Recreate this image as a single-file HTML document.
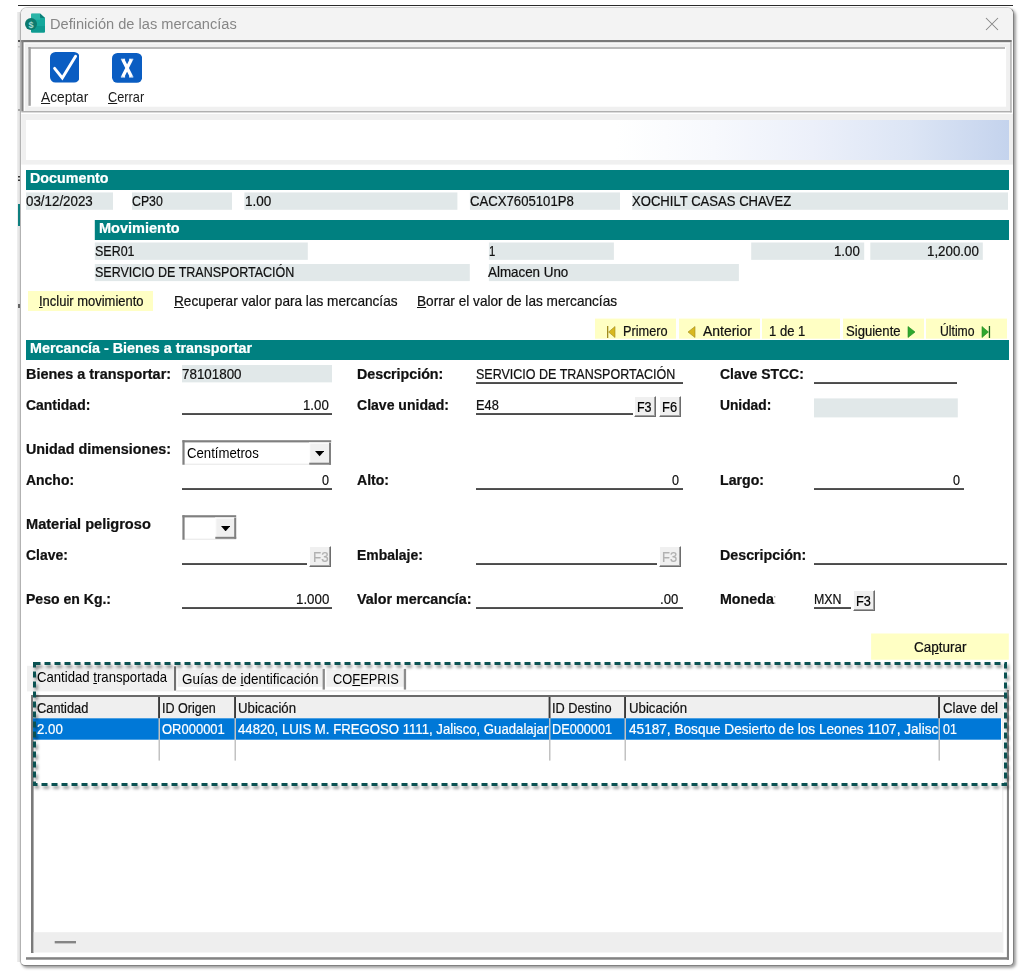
<!DOCTYPE html>
<html lang="es">
<head>
<meta charset="utf-8">
<title>Definición de las mercancías</title>
<style>
*{box-sizing:border-box;margin:0;padding:0}
html,body{width:1022px;height:974px;overflow:hidden;background:#fff}
body{position:relative;font-family:"Liberation Sans",sans-serif;font-size:13.33px;color:#111;}
.a{position:absolute;white-space:nowrap}
.hdr{position:absolute;background:#008080;color:#fff;font-weight:bold;font-size:14px;height:20px;line-height:19px;padding-left:4px;white-space:nowrap}
.gf{position:absolute;background:#e1e8e9;height:17.35px;line-height:17px;white-space:nowrap;overflow:hidden;font-size:13.33px}
.lbl{position:absolute;font-weight:bold;font-size:13.33px;line-height:16px;white-space:nowrap;color:#111}
.ul{position:absolute;border-bottom:1.75px solid #2c2c2c;height:18.9px;line-height:17px;white-space:nowrap;font-size:12px}
.r{text-align:right}
.yb{position:absolute;background:#ffffc4;white-space:nowrap;font-size:12px;text-align:center}
.fb{position:absolute;background:#f0f0f0;border:1px solid;border-color:#fff #6d6d6d #6d6d6d #fff;box-shadow:inset -1px -1px 0 #a0a0a0;font-size:12px;text-align:center;white-space:nowrap;color:#000}
.fb.dis{color:#b4b4b4}
u{text-decoration:underline;text-underline-offset:1px}
.x{position:absolute;white-space:nowrap;line-height:1.117;transform-origin:0 50%;-webkit-text-stroke:0.22px currentColor}
</style>
</head>
<body>

<!-- background window remnants -->
<svg class="a" style="left:18px;top:5px" width="995" height="1"><rect x="0.00" y="0.00" width="995" height="1" fill="#2a2a2a"/></svg>
<div class="a" style="left:17px;top:12px;width:3px;height:950px;background:linear-gradient(90deg,#f0f0f0,#dedede)"></div>
<svg class="a" style="left:18px;top:176px" width="3" height="2"><rect x="0.00" y="0.00" width="2.5" height="1.5" fill="#333"/></svg>
<svg class="a" style="left:18px;top:179px" width="3" height="2"><rect x="0.00" y="0.50" width="2.5" height="1.5" fill="#333"/></svg>
<svg class="a" style="left:18px;top:204px" width="3" height="22"><rect x="0.00" y="0.00" width="2.5" height="22" fill="#0f8080"/></svg>
<svg class="a" style="left:18px;top:40px" width="3" height="2"><rect x="0.00" y="0.00" width="3" height="2" fill="#555"/></svg>
<svg class="a" style="left:18px;top:46px" width="3" height="2"><rect x="0.00" y="0.00" width="3" height="1.5" fill="#c0c0c0"/></svg>
<svg class="a" style="left:18px;top:109px" width="3" height="2"><rect x="0.00" y="0.00" width="3" height="2" fill="#a8a8a8"/></svg>
<svg class="a" style="left:18px;top:304px" width="3" height="4"><rect x="0.00" y="0.00" width="2.5" height="4" fill="#666"/></svg>

<!-- window frame -->
<div id="win" class="a" style="left:20px;top:7px;width:994px;height:959px;background:#fff;border:1px solid;border-color:#cfcfcf #808080 #808080 #b2b2b2;border-radius:7px 7px 5px 5px;box-shadow:2px 2px 3px rgba(0,0,0,.38)"></div>

<!-- title bar -->
<div id="tbar" class="a" style="left:21px;top:8px;width:992px;height:32px;background:#f3f3f3;border-radius:6px 6px 0 0"></div>

<!-- app icon -->
<svg class="a" style="left:24px;top:12px" width="22" height="22" viewBox="0 0 22 22">
  <path d="M8 1.5h8l5 4.5v13.5a1 1 0 0 1-1 1H8a1 1 0 0 1-1-1V2.5a1 1 0 0 1 1-1z" fill="#14a89c"/>
  <path d="M7 1.8h9v6H7z" fill="#3cc0b2" opacity=".55"/>
  <path d="M16 1.5l5 4.5h-4a1 1 0 0 1-1-1z" fill="#0b7f78"/>
  <path d="M7 14h14v5.5a1 1 0 0 1-1 1H8a1 1 0 0 1-1-1z" fill="#0e9a90"/>
  <circle cx="7" cy="12" r="6" fill="#0c7a6e"/>
  <text x="7" y="15.6" font-family="Liberation Sans" font-weight="bold" font-size="9" text-anchor="middle" fill="#a6dbd3">$</text>
</svg>
<!-- close X -->
<svg class="a" style="left:985px;top:17px" width="14" height="14" viewBox="0 0 14 14"><path d="M1 1L13 13M13 1L1 13" stroke="#858585" stroke-width="1.05" fill="none"/></svg>

<!-- title separator + toolbar outer frame -->
<svg class="a" style="left:21px;top:40px" width="991" height="73"><rect x="0.30" y="0.00" width="990.4" height="72.4" fill="#f0f0f0"/></svg>
<svg class="a" style="left:23px;top:42px" width="988" height="2"><rect x="0.50" y="0.20" width="986.7" height="1.3" fill="#ffffff"/></svg>
<svg class="a" style="left:23px;top:42px" width="2" height="69"><rect x="0.50" y="0.20" width="1.4" height="68.8" fill="#ffffff"/></svg>
<svg class="a" style="left:21px;top:40px" width="991" height="3"><rect x="0.30" y="0.00" width="990.4" height="2.2" fill="#787878"/></svg>
<svg class="a" style="left:21px;top:40px" width="3" height="71"><rect x="0.30" y="0.00" width="2.2" height="71" fill="#7f7f7f"/></svg>
<svg class="a" style="left:1010px;top:42px" width="2" height="71"><rect x="0.20" y="0.20" width="1.5" height="70.2" fill="#b4b4b4"/></svg>
<svg class="a" style="left:21px;top:111px" width="991" height="2"><rect x="0.30" y="0.00" width="990.4" height="1.4" fill="#b0b0b0"/></svg>
<svg class="a" style="left:28px;top:47px" width="979" height="60"><rect x="0.40" y="0.10" width="977.7" height="59.6" fill="#ffffff"/></svg>
<svg class="a" style="left:28px;top:47px" width="977" height="2"><rect x="0.40" y="0.10" width="976.6" height="1.8" fill="#b2b2b2"/></svg>
<svg class="a" style="left:28px;top:47px" width="3" height="59"><rect x="0.40" y="0.10" width="2.4" height="58.7" fill="#a0a0a0"/></svg>

<!-- toolbar buttons -->
<svg class="a" style="left:49.6px;top:52.3px" width="29.6" height="30.6" viewBox="0 0 29.6 30.6"><rect x="0" y="0" width="29.6" height="30.6" rx="5.5" fill="#0a5dc2"/><path d="M4.6 16.4L12.3 26L25.6 4.2" stroke="#fff" stroke-width="2.9" fill="none" stroke-linecap="round" stroke-linejoin="miter"/></svg>
<svg class="a" style="left:112px;top:53px" width="30.2" height="29.8" viewBox="0 0 30.2 29.8"><rect x="0" y="0" width="30.2" height="29.8" rx="5.5" fill="#0a5dc2"/><path d="M10.8 6.6L19.4 23.6M19.4 6.6L10.8 23.6" stroke="#fff" stroke-width="3.3" fill="none"/><path d="M8.9 6.3h4.2M17.1 6.3h4.2M8.9 23.9h4.2M17.1 23.9h4.2" stroke="#fff" stroke-width="1.1"/></svg>

<!-- gray band + gradient panel -->
<svg class="a" style="left:21px;top:114px" width="992" height="51"><rect x="0.20" y="0.00" width="991.8" height="50.6" fill="#f0f0f0"/></svg>
<div class="a" style="left:26px;top:120px;width:983px;height:40px;background:linear-gradient(90deg,#fff 0%,#fff 60%,#f7f9fd 70%,#ecf0fa 80%,#dce5f5 90%,#c4d3ed 100%)"></div>

<!-- Documento -->
<svg class="a" style="left:26px;top:170px" width="983" height="20"><rect x="0.00" y="0.00" width="983" height="20" fill="#008080"/></svg>
<svg class="a" style="left:26px;top:192px" width="87" height="18"><rect x="0.00" y="0.45" width="87" height="17.35" fill="#e1e8e9"/></svg>
<svg class="a" style="left:132px;top:192px" width="100" height="18"><rect x="0.00" y="0.45" width="100" height="17.35" fill="#e1e8e9"/></svg>
<svg class="a" style="left:244px;top:192px" width="214" height="18"><rect x="0.40" y="0.45" width="213" height="17.35" fill="#e1e8e9"/></svg>
<svg class="a" style="left:469px;top:192px" width="151" height="18"><rect x="0.90" y="0.45" width="150.1" height="17.35" fill="#e1e8e9"/></svg>
<svg class="a" style="left:632px;top:192px" width="376" height="18"><rect x="0.20" y="0.45" width="375.8" height="17.35" fill="#e1e8e9"/></svg>

<!-- Movimiento -->
<svg class="a" style="left:94px;top:220px" width="915" height="20"><rect x="0.80" y="0.00" width="914.2" height="20" fill="#008080"/></svg>
<svg class="a" style="left:94px;top:242px" width="214" height="18"><rect x="0.80" y="0.50" width="213" height="17.35" fill="#e1e8e9"/></svg>
<svg class="a" style="left:488px;top:242px" width="126" height="18"><rect x="0.90" y="0.50" width="125" height="17.35" fill="#e1e8e9"/></svg>
<svg class="a" style="left:751px;top:242px" width="114" height="18"><rect x="0.20" y="0.50" width="113" height="17.35" fill="#e1e8e9"/></svg>
<svg class="a" style="left:870px;top:242px" width="113" height="18"><rect x="0.30" y="0.50" width="112.5" height="17.35" fill="#e1e8e9"/></svg>
<svg class="a" style="left:94px;top:264px" width="376" height="18"><rect x="0.80" y="0.00" width="375" height="17.1" fill="#e1e8e9"/></svg>
<svg class="a" style="left:488px;top:264px" width="251" height="18"><rect x="0.90" y="0.00" width="250" height="17.1" fill="#e1e8e9"/></svg>

<!-- action row -->
<svg class="a" style="left:28px;top:291px" width="125" height="20"><rect x="0.00" y="0.00" width="125" height="20" fill="#ffffc4"/></svg>


<!-- nav buttons -->
<svg class="a" style="left:595px;top:318px" width="81" height="21"><rect x="0.00" y="0.60" width="81" height="20.1" fill="#ffffc4"/></svg>
<svg class="a" style="left:679px;top:318px" width="81" height="21"><rect x="0.00" y="0.60" width="81" height="20.1" fill="#ffffc4"/></svg>
<svg class="a" style="left:762px;top:318px" width="78" height="21"><rect x="0.00" y="0.60" width="78" height="20.1" fill="#ffffc4"/></svg>
<svg class="a" style="left:843px;top:318px" width="81" height="21"><rect x="0.00" y="0.60" width="81" height="20.1" fill="#ffffc4"/></svg>
<svg class="a" style="left:926px;top:318px" width="81" height="21"><rect x="0.00" y="0.60" width="81" height="20.1" fill="#ffffc4"/></svg>
<svg class="a" style="left:606px;top:325.9px" width="10" height="12" viewBox="0 0 10 12"><rect x="1" y="0" width="1.3" height="12" fill="#a08a20"/><path d="M9 0.5V11.5L2.6 6z" fill="#d8b820" stroke="#a08a20" stroke-width=".6"/></svg>
<svg class="a" style="left:687px;top:325.9px" width="9" height="12" viewBox="0 0 9 12"><path d="M8 0.5V11.5L1 6z" fill="#d8b820" stroke="#a08a20" stroke-width=".6"/></svg>
<svg class="a" style="left:907px;top:325.9px" width="9" height="12" viewBox="0 0 9 12"><path d="M1 0.5V11.5L8 6z" fill="#2fa82f" stroke="#1f8a1f" stroke-width=".6"/></svg>
<svg class="a" style="left:981px;top:325.9px" width="10" height="12" viewBox="0 0 10 12"><path d="M1 0.5V11.5L7.4 6z" fill="#2fa82f" stroke="#1f8a1f" stroke-width=".6"/><rect x="7.8" y="0" width="1.3" height="12" fill="#1f6a1f"/></svg>

<!-- Mercancia header -->
<svg class="a" style="left:26px;top:340px" width="983" height="20"><rect x="0.00" y="0.00" width="983" height="20" fill="#008080"/></svg>

<!-- form row 1 -->
<svg class="a" style="left:182px;top:365px" width="150" height="18"><rect x="0.00" y="0.00" width="150" height="17.35" fill="#e1e8e9"/></svg>
<svg class="a" style="left:476px;top:382px" width="207" height="2"><rect x="0.00" y="0.20" width="207" height="1.65" fill="#2c2c2c"/></svg>
<svg class="a" style="left:814px;top:382px" width="143" height="2"><rect x="0.00" y="0.20" width="143" height="1.65" fill="#2c2c2c"/></svg>

<!-- form row 2 -->
<svg class="a" style="left:182px;top:413px" width="150" height="2"><rect x="0.00" y="0.20" width="150" height="1.65" fill="#2c2c2c"/></svg>
<svg class="a" style="left:476px;top:413px" width="157" height="2"><rect x="0.00" y="0.20" width="157" height="1.65" fill="#2c2c2c"/></svg>
<div class="fb" style="left:634px;top:396px;width:22px;height:21px;line-height:19px"></div>
<div class="fb" style="left:659px;top:396px;width:22px;height:21px;line-height:19px"></div>
<svg class="a" style="left:814px;top:398px" width="144" height="20"><rect x="0.00" y="0.40" width="143.8" height="19" fill="#e1e8e9"/></svg>

<!-- form row 3 -->
<svg class="a" style="left:182px;top:440px" width="150" height="25"><rect x="0.40" y="0.20" width="148.8" height="24.5" fill="#ffffff"/></svg>
<svg class="a" style="left:182px;top:463px" width="150" height="2"><rect x="0.40" y="0.70" width="148.8" height="1" fill="#e6e6e6"/></svg>
<svg class="a" style="left:182px;top:440px" width="150" height="3"><rect x="0.40" y="0.20" width="148.8" height="2.2" fill="#808080"/></svg>
<svg class="a" style="left:182px;top:440px" width="3" height="25"><rect x="0.40" y="0.20" width="2.2" height="24.5" fill="#808080"/></svg>
<svg class="a" style="left:309px;top:442px" width="22" height="23"><rect x="0.20" y="0.60" width="21.8" height="22.1" fill="#f0f0f0"/></svg>
<svg class="a" style="left:309px;top:442px" width="22" height="2"><rect x="0.20" y="0.60" width="21.8" height="1" fill="#ffffff"/></svg>
<svg class="a" style="left:309px;top:442px" width="2" height="23"><rect x="0.20" y="0.60" width="1" height="22.1" fill="#ffffff"/></svg>
<svg class="a" style="left:329px;top:442px" width="2" height="23"><rect x="0.00" y="0.60" width="2" height="22.1" fill="#808080"/></svg>
<svg class="a" style="left:309px;top:462px" width="22" height="3"><rect x="0.20" y="0.70" width="21.8" height="2" fill="#808080"/></svg>
<svg class="a" style="left:314.9px;top:451.3px" width="9.2" height="5.3" viewBox="0 0 9.2 5.3"><path d="M0 0h9.2L4.6 5.3z" fill="#000"/></svg>

<!-- form row 4 -->
<svg class="a" style="left:182px;top:488px" width="150" height="2"><rect x="0.00" y="0.20" width="150" height="1.65" fill="#2c2c2c"/></svg>
<svg class="a" style="left:476px;top:488px" width="207" height="2"><rect x="0.00" y="0.20" width="207" height="1.65" fill="#2c2c2c"/></svg>
<svg class="a" style="left:814px;top:488px" width="150" height="2"><rect x="0.00" y="0.20" width="150" height="1.65" fill="#2c2c2c"/></svg>

<!-- form row 5 -->
<svg class="a" style="left:182px;top:515px" width="55" height="25"><rect x="0.40" y="0.20" width="53.8" height="24.5" fill="#ffffff"/></svg>
<svg class="a" style="left:182px;top:538px" width="55" height="2"><rect x="0.40" y="0.70" width="53.8" height="1" fill="#e6e6e6"/></svg>
<svg class="a" style="left:182px;top:515px" width="55" height="3"><rect x="0.40" y="0.20" width="53.8" height="2.2" fill="#808080"/></svg>
<svg class="a" style="left:182px;top:515px" width="3" height="25"><rect x="0.40" y="0.20" width="2.2" height="24.5" fill="#808080"/></svg>
<svg class="a" style="left:215px;top:517px" width="22" height="22"><rect x="0.30" y="0.60" width="20.9" height="21.2" fill="#f0f0f0"/></svg>
<svg class="a" style="left:215px;top:517px" width="22" height="2"><rect x="0.30" y="0.60" width="20.9" height="1" fill="#ffffff"/></svg>
<svg class="a" style="left:215px;top:517px" width="2" height="22"><rect x="0.30" y="0.60" width="1" height="21.2" fill="#ffffff"/></svg>
<svg class="a" style="left:234px;top:517px" width="3" height="22"><rect x="0.20" y="0.60" width="2" height="21.2" fill="#808080"/></svg>
<svg class="a" style="left:215px;top:536px" width="22" height="3"><rect x="0.30" y="0.80" width="20.9" height="2" fill="#808080"/></svg>
<svg class="a" style="left:221px;top:526px" width="9.2" height="5.3" viewBox="0 0 9.2 5.3"><path d="M0 0h9.2L4.6 5.3z" fill="#000"/></svg>

<!-- form row 6 -->
<svg class="a" style="left:182px;top:563px" width="125" height="2"><rect x="0.00" y="0.20" width="125" height="1.65" fill="#2c2c2c"/></svg>
<div class="fb dis" style="left:309px;top:546px;width:22px;height:21px;line-height:19px"></div>
<svg class="a" style="left:476px;top:563px" width="181" height="2"><rect x="0.00" y="0.20" width="181" height="1.65" fill="#2c2c2c"/></svg>
<div class="fb dis" style="left:659px;top:546px;width:22px;height:21px;line-height:19px"></div>
<svg class="a" style="left:814px;top:563px" width="193" height="2"><rect x="0.00" y="0.20" width="193" height="1.65" fill="#2c2c2c"/></svg>

<!-- form row 7 -->
<svg class="a" style="left:182px;top:607px" width="150" height="2"><rect x="0.00" y="0.20" width="150" height="1.65" fill="#2c2c2c"/></svg>
<svg class="a" style="left:476px;top:607px" width="207" height="2"><rect x="0.00" y="0.20" width="207" height="1.65" fill="#2c2c2c"/></svg>
<svg class="a" style="left:814px;top:607px" width="37" height="2"><rect x="0.00" y="0.20" width="37" height="1.65" fill="#2c2c2c"/></svg>
<div class="fb" style="left:853px;top:590px;width:22px;height:21px;line-height:19px"></div>

<!-- Capturar -->
<svg class="a" style="left:871px;top:633px" width="138" height="27"><rect x="0.10" y="0.50" width="137.7" height="26.2" fill="#ffffc4"/></svg>


<!-- tab strip -->
<svg class="a" style="left:27px;top:665px" width="148" height="27"><rect x="0.00" y="0.80" width="147.2" height="25.6" fill="#f0f0f0"/></svg>
<svg class="a" style="left:174px;top:666px" width="3" height="25"><rect x="0.00" y="0.30" width="2.1" height="24.3" fill="#707070"/></svg>
<svg class="a" style="left:177px;top:669px" width="146" height="18"><rect x="0.60" y="0.60" width="145" height="17.2" fill="#f0f0f0"/></svg>
<svg class="a" style="left:322px;top:668px" width="3" height="22"><rect x="0.60" y="0.90" width="2.3" height="20.7" fill="#8c8c8c"/></svg>
<svg class="a" style="left:326px;top:669px" width="78" height="18"><rect x="0.40" y="0.60" width="77.5" height="17.2" fill="#f0f0f0"/></svg>
<svg class="a" style="left:403px;top:668px" width="4" height="22"><rect x="0.80" y="0.90" width="2.3" height="20.7" fill="#8c8c8c"/></svg>
<svg class="a" style="left:176px;top:690px" width="832" height="2"><rect x="0.20" y="0.20" width="831" height="1.4" fill="#e4e4e4"/></svg>

<!-- grid frame -->
<svg class="a" style="left:31px;top:695px" width="976" height="258"><rect x="0.00" y="0.00" width="976" height="258" fill="#ffffff"/></svg>
<svg class="a" style="left:31px;top:695px" width="976" height="2"><rect x="0.00" y="0.00" width="976" height="2" fill="#6a6a6a"/></svg>
<svg class="a" style="left:31px;top:695px" width="3" height="258"><rect x="0.00" y="0.00" width="2.6" height="258" fill="#7a7a7a"/></svg>
<svg class="a" style="left:26px;top:957px" width="983" height="3"><rect x="0.00" y="0.20" width="983" height="2.5" fill="#828282"/></svg>
<svg class="a" style="left:1006px;top:690px" width="3" height="270"><rect x="0.90" y="0.00" width="2.1" height="269.7" fill="#828282"/></svg>
<svg class="a" style="left:1002px;top:697px" width="2" height="256"><rect x="0.30" y="0.00" width="1" height="256" fill="#ececec"/></svg>
<!-- header row -->
<svg class="a" style="left:33px;top:697px" width="969" height="22"><rect x="0.00" y="0.00" width="969" height="21.3" fill="#efefef"/></svg>
<!-- selected row -->
<svg class="a" style="left:33px;top:718px" width="968" height="22"><rect x="0.00" y="0.30" width="968" height="21.4" fill="#0078d7"/></svg>
<!-- header separators -->
<svg class="a" style="left:158px;top:697px" width="2" height="22"><rect x="0.10" y="0.00" width="1.9" height="21.3" fill="#3a3a3a"/></svg>
<svg class="a" style="left:234px;top:697px" width="2" height="22"><rect x="0.10" y="0.00" width="1.9" height="21.3" fill="#3a3a3a"/></svg>
<svg class="a" style="left:548px;top:697px" width="3" height="22"><rect x="0.60" y="0.00" width="1.9" height="21.3" fill="#3a3a3a"/></svg>
<svg class="a" style="left:624px;top:697px" width="2" height="22"><rect x="0.10" y="0.00" width="1.9" height="21.3" fill="#3a3a3a"/></svg>
<svg class="a" style="left:938px;top:697px" width="2" height="22"><rect x="0.10" y="0.00" width="1.9" height="21.3" fill="#3a3a3a"/></svg>
<!-- row separators -->
<svg class="a" style="left:158px;top:718px" width="2" height="43"><rect x="0.50" y="0.30" width="1.5" height="42.3" fill="#c2c2c2"/></svg>
<svg class="a" style="left:234px;top:718px" width="2" height="43"><rect x="0.50" y="0.30" width="1.5" height="42.3" fill="#c2c2c2"/></svg>
<svg class="a" style="left:549px;top:718px" width="2" height="43"><rect x="0.00" y="0.30" width="1.5" height="42.3" fill="#c2c2c2"/></svg>
<svg class="a" style="left:624px;top:718px" width="2" height="43"><rect x="0.50" y="0.30" width="1.5" height="42.3" fill="#c2c2c2"/></svg>
<svg class="a" style="left:938px;top:718px" width="2" height="43"><rect x="0.50" y="0.30" width="1.5" height="42.3" fill="#c2c2c2"/></svg>
<!-- header text -->
<!-- row text -->
<!-- scrollbar -->
<svg class="a" style="left:33px;top:932px" width="970" height="21"><rect x="0.70" y="0.20" width="968.8" height="20.3" fill="#eeeeee"/></svg>
<svg class="a" style="left:54px;top:941px" width="22" height="3"><rect x="0.70" y="0.00" width="21.3" height="2.4" fill="#858585"/></svg>

<!-- dashed highlight -->
<svg class="a" style="left:28px;top:657px;overflow:visible" width="990" height="140" viewBox="28 657 990 140">
  <defs><filter id="ds" x="-2%" y="-10%" width="104%" height="125%"><feGaussianBlur stdDeviation="1.5"/></filter></defs>
  <rect x="36.3" y="666.3" width="971" height="121" fill="none" stroke="#000" stroke-opacity=".42" stroke-width="3" stroke-dasharray="6 4" filter="url(#ds)"/>
  <rect x="34.5" y="663.5" width="971" height="121" fill="none" stroke="#0b5252" stroke-width="3" stroke-dasharray="6 4"/>
</svg>

<!-- texts -->
<div id="title" class="x" style="left:49.60px;top:14.70px;font-size:15.4px;-webkit-text-stroke:0;color:#868686;transform:scaleX(0.9494);">Definición de las mercancías</div>
<div id="acept" class="x" style="left:40.60px;top:88.73px;font-size:14.8px;-webkit-text-stroke:0;color:#1a1a1a;transform:scaleX(0.9275);"><u>A</u>ceptar</div>
<div id="cerrar" class="x" style="left:108.20px;top:88.73px;font-size:14.8px;-webkit-text-stroke:0;color:#1a1a1a;transform:scaleX(0.8632);"><u>C</u>errar</div>
<div id="h_doc" class="x" style="left:30.10px;top:171.18px;font-size:14px;font-weight:bold;color:#fff;transform:scaleX(1.0208);">Documento</div>
<div id="t_fecha" class="x" style="left:26.10px;top:192.90px;font-size:14.5px;color:#111;transform:scaleX(0.9204);">03/12/2023</div>
<div id="t_cp30" class="x" style="left:132.10px;top:192.90px;font-size:14.5px;color:#111;transform:scaleX(0.8489);">CP30</div>
<div id="t_100a" class="x" style="left:244.60px;top:192.90px;font-size:14.5px;color:#111;transform:scaleX(0.9315);">1.00</div>
<div id="t_rfc" class="x" style="left:469.60px;top:192.90px;font-size:14.5px;color:#111;transform:scaleX(0.9067);">CACX7605101P8</div>
<div id="t_nom" class="x" style="left:632.10px;top:192.90px;font-size:14.5px;color:#111;transform:scaleX(0.9027);">XOCHILT CASAS CHAVEZ</div>
<div id="h_mov" class="x" style="left:99.10px;top:221.18px;font-size:14px;font-weight:bold;color:#fff;transform:scaleX(1.0362);">Movimiento</div>
<div id="t_ser" class="x" style="left:94.60px;top:242.90px;font-size:14.5px;color:#111;transform:scaleX(0.8607);">SER01</div>
<div id="t_1" class="x" style="left:489.10px;top:242.90px;font-size:14.5px;color:#111;transform:scaleX(0.7799);">1</div>
<div id="t_100b" class="x" style="left:834.35px;top:242.90px;font-size:14.5px;color:#111;transform:scaleX(0.9138);">1.00</div>
<div id="t_1200" class="x" style="left:926.60px;top:242.90px;font-size:14.5px;color:#111;transform:scaleX(0.9176);">1,200.00</div>
<div id="t_serv" class="x" style="left:94.60px;top:263.90px;font-size:14.5px;color:#111;transform:scaleX(0.8628);">SERVICIO DE TRANSPORTACIÓN</div>
<div id="t_alm" class="x" style="left:488.10px;top:263.90px;font-size:14.5px;color:#111;transform:scaleX(0.9225);">Almacen Uno</div>
<div id="b_incl" class="x" style="left:38.60px;top:293.46px;font-size:14.4px;color:#111;transform:scaleX(0.9015);"><u>I</u>ncluir movimiento</div>
<div id="b_rec" class="x" style="left:173.60px;top:293.46px;font-size:14.4px;color:#111;transform:scaleX(0.9474);"><u>R</u>ecuperar valor para las mercancías</div>
<div id="b_bor" class="x" style="left:417.10px;top:293.46px;font-size:14.4px;color:#111;transform:scaleX(0.9474);"><u>B</u>orrar el valor de las mercancías</div>
<div id="n_pri" class="x" style="left:622.60px;top:324.18px;font-size:14px;color:#111;transform:scaleX(0.9089);">Primero</div>
<div id="n_ant" class="x" style="left:703.35px;top:324.18px;font-size:14px;color:#111;transform:scaleX(0.9953);">Anterior</div>
<div id="n_1d1" class="x" style="left:769.35px;top:324.18px;font-size:14px;color:#111;transform:scaleX(0.9323);">1 de 1</div>
<div id="n_sig" class="x" style="left:846.10px;top:324.18px;font-size:14px;color:#111;transform:scaleX(0.9342);">Siguiente</div>
<div id="n_ult" class="x" style="left:939.85px;top:324.18px;font-size:14px;color:#111;transform:scaleX(0.8709);">Último</div>
<div id="h_mer" class="x" style="left:29.60px;top:341.18px;font-size:14px;font-weight:bold;color:#fff;transform:scaleX(1.0228);">Mercancía - Bienes a transportar</div>
<div id="l_bienes" class="x" style="left:26.10px;top:366.79px;font-size:13.8px;font-weight:bold;color:#111;transform:scaleX(1.0452);">Bienes a transportar:</div>
<div id="l_desc" class="x" style="left:356.85px;top:366.79px;font-size:13.8px;font-weight:bold;color:#111;transform:scaleX(1.0326);">Descripción:</div>
<div id="l_stcc" class="x" style="left:719.60px;top:366.79px;font-size:13.8px;font-weight:bold;color:#111;transform:scaleX(1.0119);">Clave STCC:</div>
<div id="l_cant" class="x" style="left:26.10px;top:397.79px;font-size:13.8px;font-weight:bold;color:#111;transform:scaleX(1.0106);">Cantidad:</div>
<div id="l_cu" class="x" style="left:356.85px;top:397.79px;font-size:13.8px;font-weight:bold;color:#111;transform:scaleX(1.0175);">Clave unidad:</div>
<div id="l_uni" class="x" style="left:719.60px;top:397.79px;font-size:13.8px;font-weight:bold;color:#111;transform:scaleX(0.9988);">Unidad:</div>
<div id="l_ud" class="x" style="left:26.10px;top:441.79px;font-size:13.8px;font-weight:bold;color:#111;transform:scaleX(1.0396);">Unidad dimensiones:</div>
<div id="l_ancho" class="x" style="left:26.10px;top:472.79px;font-size:13.8px;font-weight:bold;color:#111;transform:scaleX(1.0112);">Ancho:</div>
<div id="l_alto" class="x" style="left:356.85px;top:472.79px;font-size:13.8px;font-weight:bold;color:#111;transform:scaleX(1.0200);">Alto:</div>
<div id="l_largo" class="x" style="left:719.60px;top:472.79px;font-size:13.8px;font-weight:bold;color:#111;transform:scaleX(1.0263);">Largo:</div>
<div id="l_mat" class="x" style="left:26.10px;top:516.79px;font-size:13.8px;font-weight:bold;color:#111;transform:scaleX(1.0569);">Material peligroso</div>
<div id="l_clave" class="x" style="left:26.10px;top:547.79px;font-size:13.8px;font-weight:bold;color:#111;transform:scaleX(1.0091);">Clave:</div>
<div id="l_emb" class="x" style="left:356.85px;top:547.79px;font-size:13.8px;font-weight:bold;color:#111;transform:scaleX(1.0094);">Embalaje:</div>
<div id="l_desc2" class="x" style="left:719.60px;top:547.79px;font-size:13.8px;font-weight:bold;color:#111;transform:scaleX(1.0326);">Descripción:</div>
<div id="l_peso" class="x" style="left:26.10px;top:591.79px;font-size:13.8px;font-weight:bold;color:#111;transform:scaleX(1.0176);">Peso en Kg.:</div>
<div id="l_vm" class="x" style="left:356.85px;top:591.79px;font-size:13.8px;font-weight:bold;color:#111;transform:scaleX(1.0372);">Valor mercancía:</div>
<div id="l_mon" class="x" style="left:719.60px;top:591.79px;font-size:13.8px;font-weight:bold;color:#111;transform:scaleX(1.0321);">Moneda</div>
<div id="l_monc" class="x" style="left:773.10px;top:591.79px;font-size:13.8px;color:#aaa;transform:scaleX(0.8585);">:</div>
<div id="t_781" class="x" style="left:182.35px;top:365.90px;font-size:14.5px;color:#111;transform:scaleX(0.9230);">78101800</div>
<div id="t_desc" class="x" style="left:475.60px;top:366.51px;font-size:14.3px;color:#111;transform:scaleX(0.8751);">SERVICIO DE TRANSPORTACIÓN</div>
<div id="t_c100" class="x" style="left:303.10px;top:397.51px;font-size:14.3px;color:#111;transform:scaleX(0.9271);">1.00</div>
<div id="t_e48" class="x" style="left:475.60px;top:397.51px;font-size:14.3px;color:#111;transform:scaleX(0.8958);">E48</div>
<div id="f3a" class="x" style="left:637.35px;top:398.90px;font-size:14.5px;color:#000;transform:scaleX(0.8598);">F3</div>
<div id="f6a" class="x" style="left:662.35px;top:398.90px;font-size:14.5px;color:#000;transform:scaleX(0.8894);">F6</div>
<div id="t_cm" class="x" style="left:187.10px;top:445.12px;font-size:15px;-webkit-text-stroke:0;color:#000;transform:scaleX(0.8788);">Centímetros</div>
<div id="z_an" class="x" style="left:321.90px;top:473.01px;font-size:14.3px;color:#111;transform:scaleX(0.8802);">0</div>
<div id="z_al" class="x" style="left:671.70px;top:473.01px;font-size:14.3px;color:#111;transform:scaleX(0.8802);">0</div>
<div id="z_la" class="x" style="left:953.10px;top:473.01px;font-size:14.3px;color:#111;transform:scaleX(0.8802);">0</div>
<div id="f3b" class="x" style="left:312.60px;top:548.90px;font-size:14.5px;color:#b0b0b0;transform:scaleX(0.9189);">F3</div>
<div id="f3c" class="x" style="left:662.35px;top:548.90px;font-size:14.5px;color:#b0b0b0;transform:scaleX(0.8894);">F3</div>
<div id="t_p1000" class="x" style="left:295.60px;top:592.01px;font-size:14.3px;color:#111;transform:scaleX(0.9307);">1.000</div>
<div id="t_00" class="x" style="left:660.35px;top:592.01px;font-size:14.3px;color:#111;transform:scaleX(0.9208);">.00</div>
<div id="t_mxn" class="x" style="left:813.85px;top:592.01px;font-size:14.3px;color:#111;transform:scaleX(0.8669);">MXN</div>
<div id="f3d" class="x" style="left:856.10px;top:593.20px;font-size:14.5px;color:#000;transform:scaleX(0.8746);">F3</div>
<div id="b_cap" class="x" style="left:913.85px;top:639.68px;font-size:14px;color:#111;transform:scaleX(0.9642);">Ca<u>p</u>turar</div>
<div id="tab1" class="x" style="left:36.50px;top:669.15px;font-size:14.6px;-webkit-text-stroke:0;color:#000;transform:scaleX(0.9011);">Cantidad <u>t</u>ransportada</div>
<div id="tab2" class="x" style="left:181.60px;top:671.45px;font-size:14.6px;-webkit-text-stroke:0;color:#000;transform:scaleX(0.9243);">Guías de <u>i</u>dentificación</div>
<div id="tab3" class="x" style="left:332.60px;top:671.45px;font-size:14.6px;-webkit-text-stroke:0;color:#000;transform:scaleX(0.8819);">CO<u>F</u>EPRIS</div>
<div id="g_h1" class="x" style="left:36.50px;top:701.13px;font-size:14.1px;color:#111;transform:scaleX(0.9110);">Cantidad</div>
<div id="g_h2" class="x" style="left:162.10px;top:701.13px;font-size:14.1px;color:#111;transform:scaleX(0.8920);">ID Origen</div>
<div id="g_h3" class="x" style="left:238.35px;top:701.13px;font-size:14.1px;color:#111;transform:scaleX(0.9379);">Ubicación</div>
<div id="g_h4" class="x" style="left:552.35px;top:701.13px;font-size:14.1px;color:#111;transform:scaleX(0.9051);">ID Destino</div>
<div id="g_h5" class="x" style="left:628.60px;top:701.13px;font-size:14.1px;color:#111;transform:scaleX(0.9379);">Ubicación</div>
<div id="g_h6" class="x" style="left:942.60px;top:701.13px;font-size:14.1px;color:#111;transform:scaleX(0.9368);">Clave del</div>
<div id="g_c1" class="x" style="left:36.50px;top:721.88px;font-size:14.1px;color:#fff;transform:scaleX(0.9403);">2.00</div>
<div id="g_c2" class="x" style="left:162.10px;top:721.88px;font-size:14.1px;color:#fff;transform:scaleX(0.9212);">OR000001</div>
<div id="g_c3" class="x" style="left:238.35px;top:721.88px;font-size:14.1px;color:#fff;transform:scaleX(0.9342);">44820, LUIS M. FREGOSO 1111, Jalisco, Guadalajar</div>
<div id="g_c4" class="x" style="left:552.35px;top:721.88px;font-size:14.1px;color:#fff;transform:scaleX(0.9015);">DE000001</div>
<div id="g_c5" class="x" style="left:629.10px;top:721.88px;font-size:14.1px;color:#fff;transform:scaleX(0.9659);">45187, Bosque Desierto de los Leones 1107, Jalisc</div>
<div id="g_c6" class="x" style="left:942.60px;top:721.88px;font-size:14.1px;color:#fff;transform:scaleX(0.8797);">01</div>


</body>
</html>
